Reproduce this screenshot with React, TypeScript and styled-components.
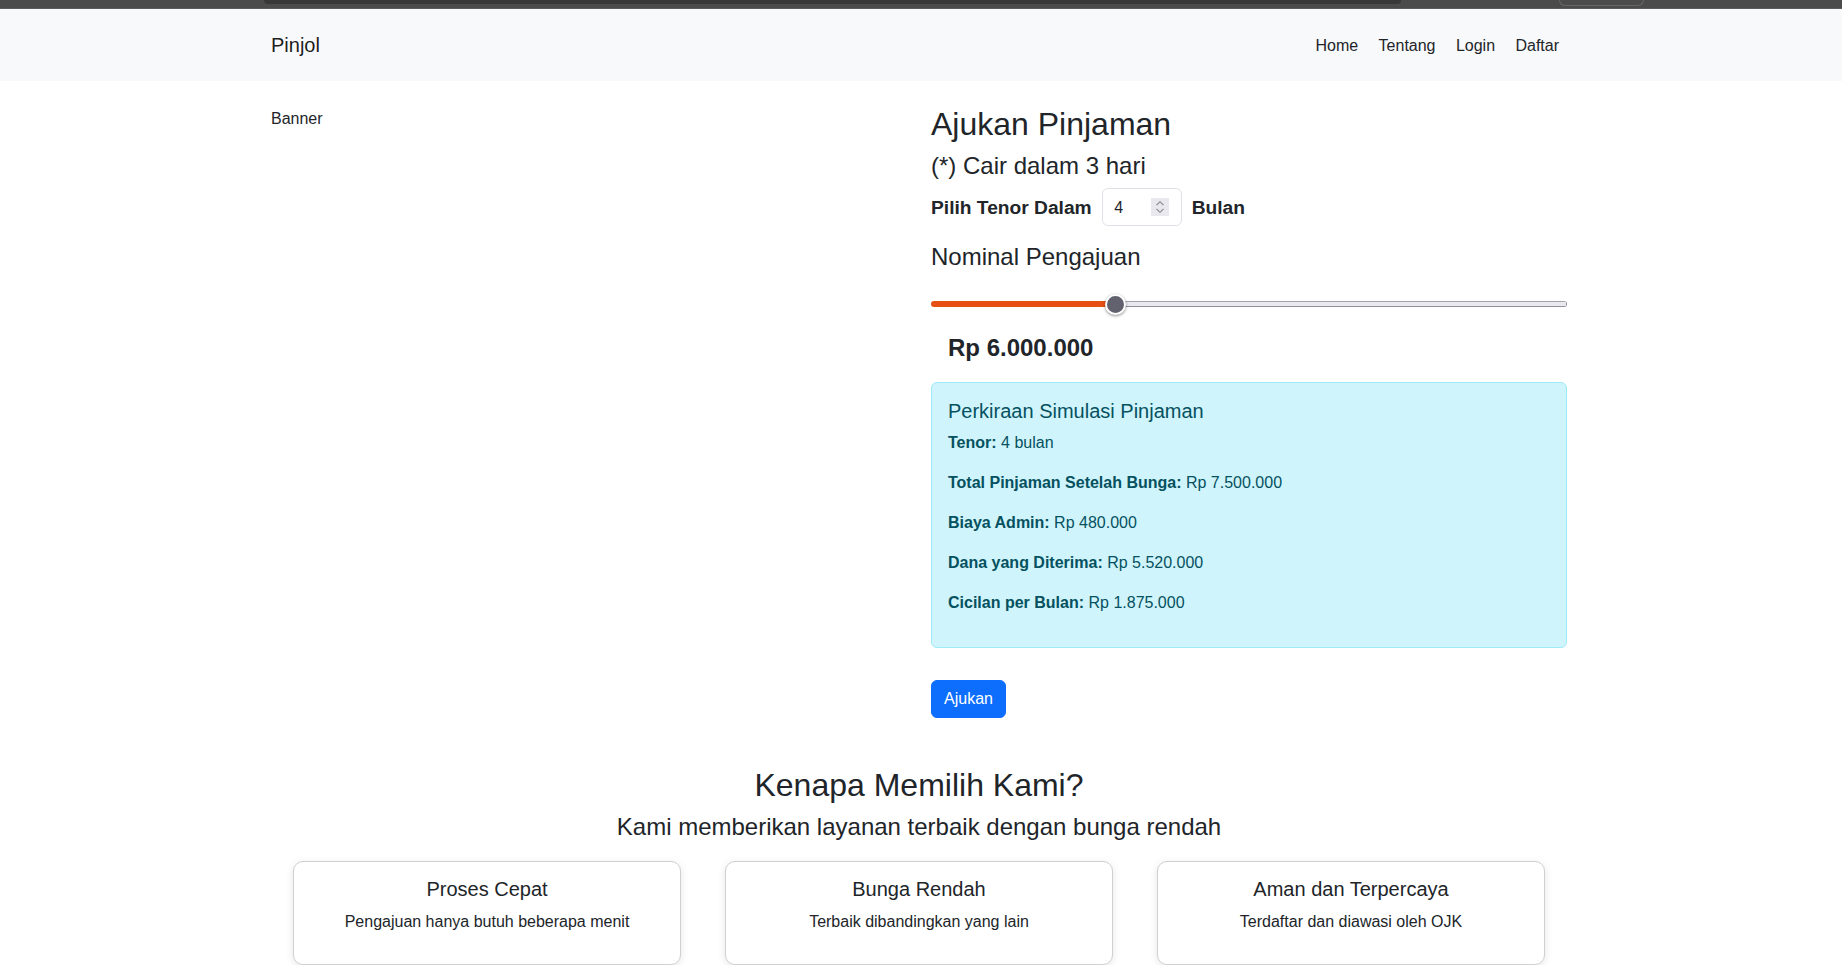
import React, { useState } from 'react';
import styled, { createGlobalStyle } from 'styled-components';

const GlobalStyle = createGlobalStyle`
  * {
    box-sizing: border-box;
  }

  body {
    margin: 0;
    background: #fff;
    color: #212529;
    font-family: "Liberation Sans", Arial, sans-serif;
    font-size: 16px;
    line-height: 1.5;
  }
`;

/* Strip of the browser window that is left at the top of the capture */
const WindowStrip = styled.div`
  height: 9px;
  background: #4b4b4b;
  border-bottom: 1px solid #5c5c5c;
  display: flex;
  align-items: flex-start;
  padding-left: 264px;
`;

const StripField = styled.div`
  width: 1137px;
  height: 4px;
  background: #383838;
  border-radius: 0 0 6px 6px;
`;

const StripButton = styled.div`
  width: 85px;
  height: 6px;
  margin-left: 158px;
  border: 1px solid #666;
  border-top: none;
  border-radius: 0 0 6px 6px;
`;

const Navbar = styled.nav`
  height: 72px;
  background: #f8f9fa;
`;

const Container = styled.div`
  width: 1320px;
  margin-left: 259px;
  padding: 0 12px;
`;

const NavInner = styled(Container)`
  height: 100%;
  display: flex;
  align-items: center;
  justify-content: space-between;
`;

const Brand = styled.a`
  font-size: 20px;
  line-height: 30px;
  color: rgba(0, 0, 0, 0.9);
  text-decoration: none;
`;

const NavLinks = styled.div`
  display: flex;
  margin-top: 2px;
`;

const NavLink = styled.a`
  padding: 8px 10.2px;
  color: #212529;
  text-decoration: none;
  &:last-child {
    padding-right: 8px;
  }
`;

const Hero = styled(Container)`
  padding-top: 24.3px;
  display: grid;
  grid-template-columns: 1fr 1fr;
  column-gap: 24px;
`;

const BannerText = styled.div`
  padding-top: 1.7px;
`;

const Title = styled.h2`
  margin: 0 0 8px;
  font-size: 32px;
  font-weight: 500;
  line-height: 1.2;
`;

const Subtitle = styled.h4`
  margin: 0 0 8px;
  font-size: 24px;
  font-weight: 500;
  line-height: 1.2;
`;

const SectionTitle = styled(Subtitle)`
  padding-top: 0.6px;
`;

const TenorRow = styled.div`
  display: flex;
  align-items: center;
  gap: 10.5px;
  margin-bottom: 16px;
`;

const TenorLabel = styled.label`
  margin-top: 2px;
  font-size: 19.2px;
  font-weight: 700;
  line-height: 24px;
`;

const TenorField = styled.div`
  position: relative;
  width: 80px;
  height: 38px;
  margin-right: -1px;
`;

const TenorInput = styled.input`
  width: 100%;
  height: 100%;
  padding: 7px 12px 5px 11px;
  border: 1px solid #dee2e6;
  border-radius: 6px;
  background: #fff;
  color: #212529;
  font: inherit;
  &::-webkit-inner-spin-button {
    opacity: 0;
  }
`;

/* Drawn over the native spin button, which stays clickable underneath */
const SpinIcon = styled.svg`
  position: absolute;
  top: 10px;
  right: 13px;
  width: 18px;
  height: 18px;
  background: #e8e8ee;
  pointer-events: none;
`;

const Slider = styled.input`
  display: block;
  width: 100%;
  height: 24px;
  margin: 20.4px 0 0;
  padding: 0;
  background: transparent;
  appearance: none;
  &::-webkit-slider-runnable-track {
    height: 6px;
    border-radius: 3px;
    background:
      linear-gradient(to right, #e65014 var(--fill), transparent var(--fill)),
      linear-gradient(to left, #8f8f9d 1px, transparent 1px),
      linear-gradient(to bottom, #a4a4b0 1px, #e9e9ed 1px, #e9e9ed 5px, #8f8f9d 5px);
  }
  &::-webkit-slider-thumb {
    appearance: none;
    width: 21px;
    height: 21px;
    margin-top: -7.5px;
    border: 2px solid #fff;
    border-radius: 50%;
    background: #62626f;
    box-shadow: 0 1px 3px rgba(0, 0, 0, 0.45);
  }
`;

const Amount = styled.div`
  padding: 18px 16px 19px 17px;
  font-size: 24px;
  font-weight: 700;
  line-height: 1.2;
`;

const Simulation = styled.div`
  height: 266px;
  margin-bottom: 32px;
  padding: 16px;
  border: 1px solid #9eeaf9;
  border-radius: 6px;
  background: #cff4fc;
  color: #055160;
`;

const SimulationTitle = styled.h5`
  margin: 0 0 8px;
  font-size: 20px;
  font-weight: 500;
  line-height: 24px;
`;

const SimulationLine = styled.p`
  margin: 0 0 16px;
`;

const SubmitButton = styled.button`
  display: block;
  height: 38px;
  padding: 6px 12px;
  border: 1px solid #0d6efd;
  border-radius: 6px;
  background: #0d6efd;
  color: #fff;
  font: inherit;
`;

const Reasons = styled(Container)`
  margin-top: 48px;
  text-align: center;
`;

const CardGrid = styled.div`
  display: grid;
  grid-template-columns: repeat(3, 388px);
  justify-content: center;
  gap: 44px;
  margin-top: 19.4px;
`;

const Card = styled.div`
  height: 104px;
  padding: 15px;
  border: 1px solid #d0d0d0;
  border-radius: 10px;
  background: #fff;
  box-shadow: 0 2px 8px rgba(0, 0, 0, 0.1);
`;

const CardTitle = styled.h5`
  margin: 0 0 8.6px;
  font-size: 20px;
  font-weight: 500;
  line-height: 24px;
`;

const CardText = styled.p`
  margin: 0;
`;

const rupiah = (value: number) =>
  'Rp ' + value.toString().replace(/\B(?=(\d{3})+(?!\d))/g, '.');

const MIN_AMOUNT = 500000;
const MAX_AMOUNT = 19900000;
const THUMB = 21;

const reasons = [
  { title: 'Proses Cepat', text: 'Pengajuan hanya butuh beberapa menit' },
  { title: 'Bunga Rendah', text: 'Terbaik dibandingkan yang lain' },
  { title: 'Aman dan Terpercaya', text: 'Terdaftar dan diawasi oleh OJK' },
];

const App: React.FC = () => {
  const [tenor, setTenor] = useState(4);
  const [amount, setAmount] = useState(6000000);

  const total = amount * 1.25;
  const admin = amount * 0.08;
  const ratio = (amount - MIN_AMOUNT) / (MAX_AMOUNT - MIN_AMOUNT);
  const fill = `calc(${THUMB / 2}px + (100% - ${THUMB}px) * ${ratio})`;

  return (
    <>
      <GlobalStyle />
      <WindowStrip>
        <StripField />
        <StripButton />
      </WindowStrip>
      <Navbar>
        <NavInner>
          <Brand href="#">Pinjol</Brand>
          <NavLinks>
            <NavLink href="#">Home</NavLink>
            <NavLink href="#">Tentang</NavLink>
            <NavLink href="#">Login</NavLink>
            <NavLink href="#">Daftar</NavLink>
          </NavLinks>
        </NavInner>
      </Navbar>
      <Hero>
        <BannerText>Banner</BannerText>
        <div>
          <Title>Ajukan Pinjaman</Title>
          <Subtitle>(*) Cair dalam 3 hari</Subtitle>
          <TenorRow>
            <TenorLabel htmlFor="tenor">Pilih Tenor Dalam</TenorLabel>
            <TenorField>
              <TenorInput
                id="tenor"
                type="number"
                min={1}
                value={tenor}
                onChange={(e) => setTenor(Number(e.target.value))}
              />
              <SpinIcon viewBox="0 0 18 18" fill="none" stroke="#85858f" strokeWidth="1.1">
                <path d="M5.5 7.2 9 3.7l3.5 3.5" />
                <path d="M5.5 10.8 9 14.3l3.5-3.5" />
              </SpinIcon>
            </TenorField>
            <TenorLabel as="span">Bulan</TenorLabel>
          </TenorRow>
          <SectionTitle as="div">Nominal Pengajuan</SectionTitle>
          <Slider
            type="range"
            min={MIN_AMOUNT}
            max={MAX_AMOUNT}
            step={100000}
            value={amount}
            onChange={(e) => setAmount(Number(e.target.value))}
            style={{ '--fill': fill } as React.CSSProperties}
          />
          <Amount>{rupiah(amount)}</Amount>
          <Simulation>
            <SimulationTitle>Perkiraan Simulasi Pinjaman</SimulationTitle>
            <SimulationLine>
              <strong>Tenor:</strong> {tenor} bulan
            </SimulationLine>
            <SimulationLine>
              <strong>Total Pinjaman Setelah Bunga:</strong> {rupiah(total)}
            </SimulationLine>
            <SimulationLine>
              <strong>Biaya Admin:</strong> {rupiah(admin)}
            </SimulationLine>
            <SimulationLine>
              <strong>Dana yang Diterima:</strong> {rupiah(amount - admin)}
            </SimulationLine>
            <SimulationLine>
              <strong>Cicilan per Bulan:</strong> {rupiah(total / tenor)}
            </SimulationLine>
          </Simulation>
          <SubmitButton type="button">Ajukan</SubmitButton>
        </div>
      </Hero>
      <Reasons>
        <Title>Kenapa Memilih Kami?</Title>
        <SectionTitle>Kami memberikan layanan terbaik dengan bunga rendah</SectionTitle>
        <CardGrid>
          {reasons.map((reason) => (
            <Card key={reason.title}>
              <CardTitle>{reason.title}</CardTitle>
              <CardText>{reason.text}</CardText>
            </Card>
          ))}
        </CardGrid>
      </Reasons>
    </>
  );
};

export default App;
